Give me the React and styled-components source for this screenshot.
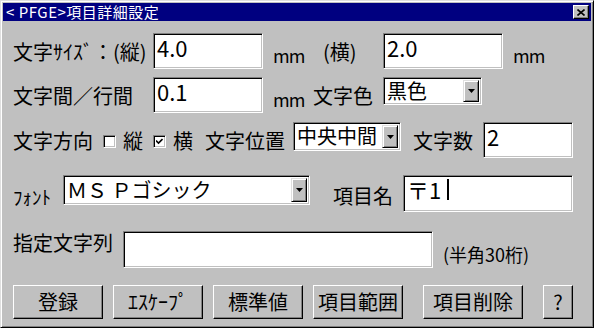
import styled, { createGlobalStyle } from "styled-components";

const GlobalStyle = createGlobalStyle`
  html, body {
    margin: 0;
    padding: 0;
    background: #c0c0c0;
  }
  body {
    width: 594px;
    height: 328px;
    overflow: hidden;
    font-family: "Noto Sans CJK JP", "Noto Sans", sans-serif;
    color: #000;
  }
`;

const Window = styled.div`
  box-sizing: border-box;
  width: 594px;
  height: 328px;
  background: #c0c0c0;
  border: 1px solid;
  border-color: #dfdfdf #000 #000 #dfdfdf;
  box-shadow: inset 1px 1px #fff, inset -1px -1px #808080;
  padding: 2px;
  display: flex;
  flex-direction: column;
`;

const TitleBar = styled.div`
  height: 18px;
  background: #000080;
  color: #fff;
  display: flex;
  align-items: center;
  justify-content: space-between;
  padding: 0 2px 0 3px;
  font-size: 15px;
  line-height: 18px;
  white-space: nowrap;
`;

const TitleText = styled.span`
  letter-spacing: 0.5px;
`;

const CloseButton = styled.div`
  box-sizing: border-box;
  width: 16px;
  height: 14px;
  background: #c0c0c0;
  border: 1px solid;
  border-color: #fff #000 #000 #fff;
  box-shadow: inset -1px -1px #808080;
  display: flex;
  align-items: center;
  justify-content: center;
`;

const Body = styled.div`
  padding: 0 0 0 10px;
  display: flex;
  flex-direction: column;
`;

const Row = styled.div`
  display: flex;
  align-items: ${({ $align }) => $align || "center"};
  margin-top: ${({ $top }) => $top}px;
  height: ${({ $h }) => $h}px;
`;

const Label = styled.span`
  flex-shrink: 0;
  width: ${({ $w }) => ($w ? `${$w}px` : "auto")};
  margin-left: ${({ $ml }) => $ml || 0}px;
  margin-top: ${({ $mt }) => $mt || 0}px;
  font-size: ${({ $size }) => $size || 20}px;
  line-height: 1.15;
  white-space: nowrap;
`;

const Unit = styled.span`
  flex-shrink: 0;
  width: ${({ $w }) => ($w ? `${$w}px` : "auto")};
  margin-left: 10px;
  margin-top: 9px;
  font-size: 18px;
  letter-spacing: -1px;
  line-height: 1.15;
`;

const Field = styled.div`
  box-sizing: border-box;
  flex-shrink: 0;
  width: ${({ $w }) => $w}px;
  height: ${({ $h }) => $h || 36}px;
  background: #fff;
  border: 1px solid;
  border-color: #808080 #fff #fff #808080;
  box-shadow: inset 1px 1px #000, inset -1px -1px #c0c0c0;
  padding: 1px 2px 0 3px;
  font-size: 22px;
  line-height: 25px;
  white-space: nowrap;
  display: flex;
  align-items: flex-start;
`;

const Caret = styled.span`
  display: inline-block;
  width: 2px;
  height: 21px;
  margin: 2px 0 0 6px;
  background: #000;
`;

const Select = styled.div`
  box-sizing: border-box;
  flex-shrink: 0;
  align-self: flex-start;
  width: ${({ $w }) => $w}px;
  height: ${({ $h }) => $h}px;
  background: #fff;
  border: 1px solid;
  border-color: #808080 #fff #fff #808080;
  box-shadow: inset 1px 1px #000, inset -1px -1px #c0c0c0;
  padding: 2px;
  display: flex;
  align-items: stretch;
`;

const SelectText = styled.div`
  flex: 1;
  padding-left: 1px;
  font-size: 20px;
  line-height: ${({ $lh }) => $lh || 22}px;
  white-space: nowrap;
`;

const ArrowButton = styled.div`
  box-sizing: border-box;
  width: 16px;
  background: #c0c0c0;
  border: 1px solid;
  border-color: #dfdfdf #000 #000 #dfdfdf;
  box-shadow: inset 1px 1px #fff, inset -1px -1px #808080;
  display: flex;
  align-items: center;
  justify-content: center;
`;

const Check = styled.div`
  box-sizing: border-box;
  flex-shrink: 0;
  width: 13px;
  height: 13px;
  margin-top: 13px;
  background: #fff;
  border: 1px solid;
  border-color: #808080 #fff #fff #808080;
  box-shadow: inset 1px 1px #000, inset -1px -1px #c0c0c0;
  display: flex;
  align-items: center;
  justify-content: center;
`;

const Button = styled.div`
  box-sizing: border-box;
  flex-shrink: 0;
  width: ${({ $w }) => $w}px;
  height: 34px;
  margin-left: ${({ $ml }) => $ml || 0}px;
  background: #c0c0c0;
  border: 1px solid;
  border-color: #fff #000 #000 #fff;
  box-shadow: inset -1px -1px #808080;
  display: flex;
  align-items: center;
  justify-content: center;
  font-size: 20px;
  line-height: 1;
  white-space: nowrap;
`;

const Arrow = () => (
  <svg width="7" height="4" viewBox="0 0 7 4">
    <path d="M0 0h7L3.5 4z" fill="#000" />
  </svg>
);

const DropDown = ({ w, h, text, lh }) => (
  <Select $w={w} $h={h}>
    <SelectText $lh={lh}>{text}</SelectText>
    <ArrowButton>
      <Arrow />
    </ArrowButton>
  </Select>
);

const CheckBox = ({ checked }) => (
  <Check>
    {checked && (
      <svg width="7" height="7" viewBox="0 0 7 7">
        <path d="M0 2.5L2.5 5L6.5 1" stroke="#000" strokeWidth="1.6" fill="none" />
      </svg>
    )}
  </Check>
);

const App = () => (
  <>
    <GlobalStyle />
    <Window>
      <TitleBar>
        <TitleText>&lt; PFGE&gt;項目詳細設定</TitleText>
        <CloseButton>
          <svg width="8" height="7" viewBox="0 0 8 7">
            <path d="M0.5 0.5L7.5 6.5M7.5 0.5L0.5 6.5" stroke="#000" strokeWidth="1.6" />
          </svg>
        </CloseButton>
      </TitleBar>
      <Body>
        <Row $top={12} $h={36}>
          <Label $w={140}>文字ｻｲｽﾞ：(縦)</Label>
          <Field $w={110}>4.0</Field>
          <Unit $w={50}>mm</Unit>
          <Label $w={60}>(横)</Label>
          <Field $w={120}>2.0</Field>
          <Unit>mm</Unit>
        </Row>
        <Row $top={8} $h={36}>
          <Label $w={140}>文字間／行間</Label>
          <Field $w={110}>0.1</Field>
          <Unit $w={40}>mm</Unit>
          <Label $w={70}>文字色</Label>
          <DropDown w={99} h={28} text="黒色" />
        </Row>
        <Row $top={9} $h={36} $align="flex-start">
          <Label $w={90} $mt={7}>文字方向</Label>
          <CheckBox />
          <Label $w={30} $ml={7} $mt={7}>縦</Label>
          <CheckBox checked />
          <Label $w={32} $ml={7} $mt={7}>横</Label>
          <Label $w={88} $mt={7}>文字位置</Label>
          <DropDown w={108} h={29} text="中央中間" />
          <Label $w={70} $ml={12} $mt={7}>文字数</Label>
          <Field $w={90}>2</Field>
        </Row>
        <Row $top={17} $h={37} $align="flex-start">
          <Label $w={50} $size={19} $mt={11}>ﾌｫﾝﾄ</Label>
          <DropDown w={247} h={30} text="ＭＳ Ｐゴシック" lh={24} />
          <Label $w={70} $ml={23} $mt={9}>項目名</Label>
          <Field $w={170} $h={37}>
            〒1<Caret />
          </Field>
        </Row>
        <Row $top={19} $h={37} $align="flex-start">
          <Label $w={110}>指定文字列</Label>
          <Field $w={310} $h={37} />
          <Label $ml={10} $mt={13} $size={18}>(半角30桁)</Label>
        </Row>
        <Row $top={17} $h={34}>
          <Button $w={90}>登録</Button>
          <Button $w={90} $ml={10}>ｴｽｹｰﾌﾟ</Button>
          <Button $w={90} $ml={10}>標準値</Button>
          <Button $w={90} $ml={10}>項目範囲</Button>
          <Button $w={100} $ml={20}>項目削除</Button>
          <Button $w={30} $ml={20}>?</Button>
        </Row>
      </Body>
    </Window>
  </>
);

export default App;
